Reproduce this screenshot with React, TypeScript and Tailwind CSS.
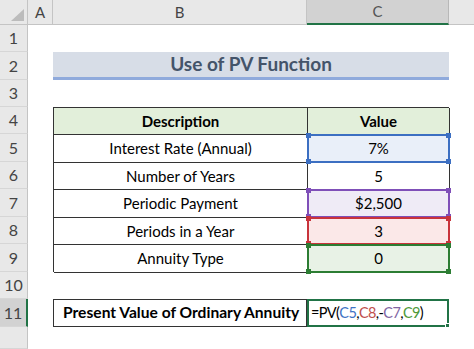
import React from "react";

const font = { fontFamily: "Lato, 'Open Sans', Arial, sans-serif" };

function Corners({ color }: { color: string }) {
  const sq = "absolute w-[5px] h-[5px]";
  return (
    <>
      <span className={`${sq} -left-[3px] -top-[3px] ${color}`} />
      <span className={`${sq} -right-[3px] -top-[3px] ${color}`} />
      <span className={`${sq} -left-[3px] -bottom-[3px] ${color}`} />
      <span className={`${sq} -right-[3px] -bottom-[3px] ${color}`} />
    </>
  );
}

function ValueCell({
  children,
  bg,
  border,
  sq,
  last,
}: {
  children: React.ReactNode;
  bg?: string;
  border?: string;
  sq?: string;
  last?: boolean;
}) {
  return (
    <div
      className={`relative flex items-center justify-center border-r border-[#333] ${
        last ? "" : "border-b"
      } ${bg ?? "bg-white"}`}
    >
      {children}
      {border && (
        <div className={`absolute -left-[1px] -top-[1px] -right-[1px] -bottom-[1px] border-2 ${border} z-10`}>
          <Corners color={sq!} />
        </div>
      )}
    </div>
  );
}

export default function App() {
  const rowNums = [1, 2, 3, 4, 5, 6, 7, 8, 9, 10, 11, 12];
  return (
    <div
      className="w-[474px] h-[349px] overflow-hidden bg-white text-black grid grid-cols-[28px_25px_254px_142px_25px] grid-rows-[25px_27px_28px_27px_27px_28px_27px_28px_27px_28px_27px_28px_22px]"
      style={font}
    >
      {/* corner */}
      <div className="bg-[#e8e8e8] border-r border-b border-[#c4c4c4] relative flex items-end justify-end pr-[3px] pb-[3px]">
        <svg width="13" height="12" viewBox="0 0 13 12">
          <polygon points="13,0 13,12 0,12" fill="#bcbcbc" />
        </svg>
      </div>
      {/* column headers */}
      <div className="bg-[#e8e8e8] border-r border-b border-[#c4c4c4] flex items-center justify-center text-[15px] text-[#444]">A</div>
      <div className="bg-[#e8e8e8] border-r border-b border-[#c4c4c4] flex items-center justify-center text-[15px] text-[#444]">B</div>
      <div className="bg-[#d2d2d2] border-r border-[#b8b8b8] border-b-2 border-b-[#217346] flex items-center justify-center text-[15px] text-[#555]">C</div>
      <div className="bg-[#e8e8e8] border-b border-[#c4c4c4]" />

      {/* row headers column */}
      <div className="row-start-2 row-end-[14] col-start-1 grid grid-rows-[27px_28px_27px_27px_28px_27px_28px_27px_28px_27px_28px_22px]">
        {rowNums.map((n) => (
          <div
            key={n}
            className={`flex items-center justify-center text-[16px] text-[#444] border-b border-[#d6d6d6] ${
              n === 11
                ? "bg-[#d2d2d2] border-r-2 border-r-[#217346]"
                : "bg-[#e8e8e8] border-r border-r-[#c4c4c4]"
            }`}
          >
            {n === 12 ? "" : n}
          </div>
        ))}
      </div>

      {/* row 2 title */}
      <div className="row-start-3 col-start-3 col-span-2 bg-[#d7dde7] border-b-[3px] border-[#8faadc] flex items-center justify-center text-[19px] font-bold text-[#44546a]">
        Use of PV Function
      </div>

      {/* table rows 4-9 */}
      <div className="row-start-5 row-end-11 col-start-3 col-span-2 grid grid-cols-[254px_142px] grid-rows-[27px_28px_27px_28px_27px_28px] border-t border-l border-[#333] text-[15px]">
        <div className="bg-[#e2efda] border-r border-b border-[#333] flex items-center justify-center font-bold">Description</div>
        <div className="bg-[#e2efda] border-r border-b border-[#333] flex items-center justify-center font-bold">Value</div>

        <div className="border-r border-b border-[#333] flex items-center justify-center">Interest Rate (Annual)</div>
        <ValueCell bg="bg-[#e9eff9]" border="border-[#3c6fc2]" sq="bg-[#3c6fc2]">7%</ValueCell>

        <div className="border-r border-b border-[#333] flex items-center justify-center">Number of Years</div>
        <ValueCell>5</ValueCell>

        <div className="border-r border-b border-[#333] flex items-center justify-center">Periodic Payment</div>
        <ValueCell bg="bg-[#efebf6]" border="border-[#7f4fb8]" sq="bg-[#7f4fb8]">$2,500</ValueCell>

        <div className="border-r border-b border-[#333] flex items-center justify-center">Periods in a Year</div>
        <ValueCell bg="bg-[#fbe8e8]" border="border-[#c8333b]" sq="bg-[#c8333b]">3</ValueCell>

        <div className="border-r border-b border-[#333] flex items-center justify-center">Annuity Type</div>
        <ValueCell bg="bg-[#e8f2e6]" border="border-[#2c7d33]" sq="bg-[#2c7d33]">0</ValueCell>
      </div>

      {/* row 11 */}
      <div className="row-start-12 col-start-3 border border-[#333] flex items-center pl-[9px] text-[15.6px] font-bold">
        Present Value of Ordinary Annuity
      </div>
      <div className="row-start-12 col-start-4 relative border-2 border-[#217346] flex items-center pl-[2px] text-[14.5px] tracking-[-0.6px]">
        <span>=PV(</span>
        <span className="text-[#3f72c4]">C5</span>
        <span>,</span>
        <span className="text-[#c0504d]">C8</span>
        <span>,-</span>
        <span className="text-[#8064a2]">C7</span>
        <span>,</span>
        <span className="text-[#4e9a3a]">C9</span>
        <span>)</span>
        <span className="absolute -right-[3px] -bottom-[3px] w-[5px] h-[5px] bg-[#217346] border border-white" />
      </div>
    </div>
  );
}
